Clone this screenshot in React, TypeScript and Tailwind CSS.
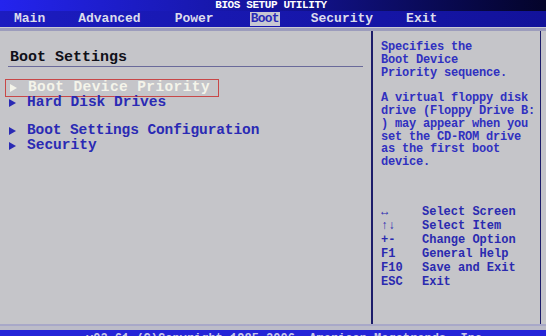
const mono = { fontFamily: '"Liberation Mono", "DejaVu Sans Mono", monospace' };

function Arrow({ color }: { color: string }) {
  return (
    <svg width="7" height="8" viewBox="0 0 7 8" className="shrink-0">
      <polygon points="0,0 7,4 0,8" fill={color} />
    </svg>
  );
}

const menu = [
  { label: "Main", left: "ml-[14px]" },
  { label: "Advanced", left: "ml-[33px]" },
  { label: "Power", left: "ml-[34px]" },
  { label: "Boot", left: "ml-[36px]", active: true },
  { label: "Security", left: "ml-[31px]" },
  { label: "Exit", left: "ml-[33px]" },
];

const helpText = [
  "Specifies the",
  "Boot Device",
  "Priority sequence.",
  "",
  "A virtual floppy disk",
  "drive (Floppy Drive B:",
  ") may appear when you",
  "set the CD-ROM drive",
  "as the first boot",
  "device.",
];

const keys = [
  ["\u2194", "Select Screen"],
  ["\u2191\u2193", "Select Item"],
  ["+-", "Change Option"],
  ["F1", "General Help"],
  ["F10", "Save and Exit"],
  ["ESC", "Exit"],
];

export default function App() {
  return (
    <div className="w-[546px] h-[336px] overflow-hidden flex flex-col bg-[#c5c5c9] font-bold" style={mono}>
      {/* title */}
      <div className="h-[11px] bg-gradient-to-r from-[#2424ee] via-[#14149a] to-[#04042a] flex justify-center items-center">
        <span className="text-[11px] leading-[11px] text-white tracking-[-0.4px] ml-[-4px]">BIOS SETUP UTILITY</span>
      </div>

      {/* menu bar */}
      <div className="h-[16px] bg-gradient-to-r from-[#1c1cc0] to-[#12129a] flex items-center text-[13px] leading-[14px] text-[#dcdcec]">
        {menu.map((m) => (
          <span
            key={m.label}
            className={`${m.left} ${m.active ? "bg-[#c8c8d2] text-[#2a2ab8] px-[1px] h-[14px] tracking-[-0.8px]" : ""}`}
          >
            {m.label}
          </span>
        ))}
      </div>

      <div className="h-[1px] bg-[#cacad2]" />
      <div className="h-[3px] bg-[#9c9cbc]" />

      {/* main area */}
      <div className="flex flex-1 border-b-2 border-[#a8a8c8]">
        <div className="w-[373px] border-r-2 border-[#1c1c6a] flex flex-col">
          <div className="mx-[8px] mt-[19px] border-b border-[#6a6a9a] text-[15px] leading-[15px] text-[#101018] pl-[2px] pb-[1px]">
            Boot Settings
          </div>

          <div className="mt-[12px] ml-[5px] w-[214px] h-[18px] border border-[#c84848] flex items-center gap-[11px] pl-[4px] text-[14.5px] tracking-[0.4px] text-[#f4f4ea]">
            <Arrow color="#f4f4ea" />
            <span>Boot Device Priority</span>
          </div>
          <div className="-mt-[2px] ml-[9px] h-[15px] flex items-center gap-[11px] text-[14.5px] text-[#2a2ab4]">
            <Arrow color="#2a2ab4" />
            <span>Hard Disk Drives</span>
          </div>
          <div className="mt-[13px] ml-[9px] h-[15px] flex items-center gap-[11px] text-[14.5px] tracking-[-0.1px] text-[#2a2ab4]">
            <Arrow color="#2a2ab4" />
            <span>Boot Settings Configuration</span>
          </div>
          <div className="ml-[9px] h-[15px] flex items-center gap-[11px] text-[14.5px] text-[#2a2ab4]">
            <Arrow color="#2a2ab4" />
            <span>Security</span>
          </div>
        </div>

        <div className="w-[168px] border-r border-[#1c1c6a] pl-[8px] pt-[10px] flex flex-col text-[#3030c0]">
          <div className="text-[12px] leading-[12.8px] whitespace-pre tracking-[-0.2px]">
            {helpText.map((t, i) => (
              <div key={i} className="h-[12.8px]">{t}</div>
            ))}
          </div>
          <div className="mt-[36px] text-[12px] leading-[14px] text-[#2a2ab0]">
            {keys.map(([k, d]) => (
              <div key={d} className="flex h-[14px]">
                <span className="w-[41px]">{k}</span>
                <span>{d}</span>
              </div>
            ))}
          </div>
        </div>
      </div>

      <div className="h-[4px] bg-[#bcbcc8]" />
      <div className="h-[6px] bg-[#2424d8] overflow-hidden pl-[86px]">
        <div className="text-[12px] leading-[12px] pt-[3px] text-[#c8c8e8] whitespace-nowrap">
          v02.61 (C)Copyright 1985-2006, American Megatrends, Inc.
        </div>
      </div>
    </div>
  );
}
